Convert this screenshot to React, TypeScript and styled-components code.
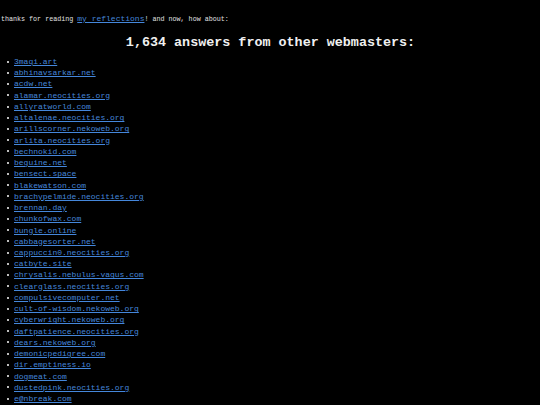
import React from "react";
import styled, { createGlobalStyle } from "styled-components";

const Global = createGlobalStyle`
  html, body { margin: 0; padding: 0; background: #000; }
  body { font-family: "Liberation Mono", "DejaVu Sans Mono", monospace; color: #e6e6e6; }
`;

const Page = styled.div`
  padding: 14px 0 0 1px;
`;

const Intro = styled.p`
  margin: 0;
  font-size: 6.7px;
  line-height: 10px;
  color: #e0e0e0;
`;

const IntroLink = styled.a`
  font-size: 8px;
  color: #4587db;
  text-decoration: underline;
`;

const Heading = styled.h1`
  margin: 11px 0 0 0;
  text-align: center;
  font-size: 13.4px;
  line-height: 16px;
  font-weight: bold;
  color: #f0f0f0;
`;

const List = styled.ul`
  margin: 5px 0 0 0;
  padding: 0 0 0 6px;
  list-style: none;
`;

const Item = styled.li`
  display: flex;
  align-items: center;
  gap: 5px;
  font-size: 8px;
  line-height: 11.23px;
  color: #cfcfcf;
  &::before {
    content: "";
    width: 2px;
    height: 2px;
    background: #bdbdbd;
    flex: none;
  }
`;

const SiteLink = styled.a`
  color: #4587db;
  text-decoration: underline;
`;

const sites = [
  "3maqi.art",
  "abhinavsarkar.net",
  "acdw.net",
  "alamar.neocities.org",
  "allyratworld.com",
  "altalenae.neocities.org",
  "arillscorner.nekoweb.org",
  "arlita.neocities.org",
  "bechnokid.com",
  "beguine.net",
  "bensect.space",
  "blakewatson.com",
  "brachypelmide.neocities.org",
  "brennan.day",
  "chunkofwax.com",
  "bungle.online",
  "cabbagesorter.net",
  "cappuccin0.neocities.org",
  "catbyte.site",
  "chrysalis.nebulus-vagus.com",
  "clearglass.neocities.org",
  "compulsivecomputer.net",
  "cult-of-wisdom.nekoweb.org",
  "cyberwright.nekoweb.org",
  "daftpatience.neocities.org",
  "dears.nekoweb.org",
  "demonicpedigree.com",
  "dir.emptiness.io",
  "dogmeat.com",
  "dustedpink.neocities.org",
  "e@nbreak.com",
];

export default function App() {
  return (
    <>
      <Global />
      <Page>
        <Intro>
          thanks for reading <IntroLink href="#">my reflections</IntroLink>! and now, how about:
        </Intro>
        <Heading>1,634 answers from other webmasters:</Heading>
        <List>
          {sites.map((s) => (
            <Item key={s}>
              <SiteLink href="#">{s}</SiteLink>
            </Item>
          ))}
        </List>
      </Page>
    </>
  );
}
